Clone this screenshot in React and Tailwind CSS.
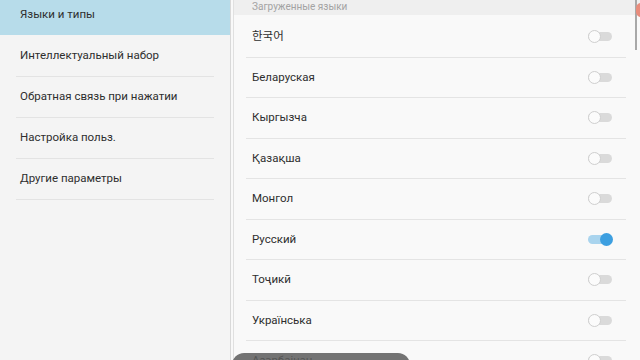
import { useState } from 'react';

const menu = [
  'Языки и типы',
  'Интеллектуальный набор',
  'Обратная связь при нажатии',
  'Настройка польз.',
  'Другие параметры',
];

const langs = [
  { name: '한국어', on: false },
  { name: 'Беларуская', on: false },
  { name: 'Кыргызча', on: false },
  { name: 'Қазақша', on: false },
  { name: 'Монгол', on: false },
  { name: 'Русский', on: true },
  { name: 'Тоҷикӣ', on: false },
  { name: 'Українська', on: false },
  { name: 'Азәрбајҹан', on: false },
];

const Toggle = ({ on }) => (
  <div className={`w-[24px] h-[9px] rounded-full flex items-center ${on ? 'bg-[#a9d4ee] justify-end' : 'bg-[#dadada] justify-start'}`}>
    <div
      className={`w-[13px] h-[13px] rounded-full shrink-0 ${
        on ? 'mr-[-1px] bg-[#3d9fe0]' : 'bg-[#fbfbfb] border border-[#cfcfcf]'
      }`}
    />
  </div>
);

const App = () => {
  const [items, setItems] = useState(langs);

  return (
    <div className="relative w-[640px] h-[360px] overflow-hidden flex bg-[#f9f9f9] text-[#2e2e2e]" style={{ fontFamily: 'Roboto, "Noto Sans", "Noto Sans CJK KR", sans-serif' }}>
      {/* Left menu */}
      <div className="w-[231px] shrink-0 bg-[#f4f4f4] border-r border-[#d9d9d9]">
        <div className="mt-[-5px]">
          {menu.map((m, i) => (
            <div key={m}>
              <div className={`h-[40px] flex items-center pl-[20px] text-[11.5px] ${i === 0 ? 'bg-[#b7dcea]' : ''}`}>{m}</div>
              <div className={`mx-[16px] h-px ${i > 0 ? 'bg-[#e3e3e3]' : ''}`} />
            </div>
          ))}
        </div>
      </div>

      {/* Right list */}
      <div className="flex-1 ml-[2px] border-l border-[#e0e0e0] bg-[#f9f9f9]">
        <div className="h-[15px] bg-[#efefef] flex items-end pl-[18px] text-[10px] text-[#a3a3a3] leading-[14px] overflow-hidden">
          <span className="mb-[1px]">Загруженные языки</span>
        </div>
        <div className="mt-[2px] pl-[12px] pr-[14px]">
          {items.map((l, i) => (
            <div key={l.name}>
              <div
                className="h-[39.5px] flex items-center justify-between pl-[6px] pr-[14px] text-[11.5px] cursor-pointer"
                onClick={() => setItems(items.map((x, j) => (j === i ? { ...x, on: !x.on } : x)))}
              >
                <span>{l.name}</span>
                <Toggle on={l.on} />
              </div>
              <div className="h-px bg-[#e4e4e4]" />
            </div>
          ))}
        </div>
      </div>

      {/* scrollbar + edge dot */}
      <div className="absolute right-[3px] top-0 w-[2px] h-[50px] bg-[#a8a8a8]" />
      <div className="absolute right-[-6px] top-[3px] w-[10px] h-[14px] rounded-full bg-[#e98c7c]" />

      {/* toast */}
      <div className="absolute left-[232px] top-[353px] w-[178px] h-[24px] rounded-full bg-[#5c5c5c]/85" />
    </div>
  );
};

export default App;
